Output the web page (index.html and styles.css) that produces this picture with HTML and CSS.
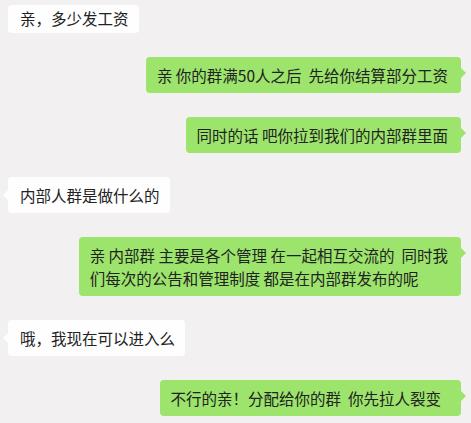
FILE: index.html
```html
<!DOCTYPE html>
<html lang="zh-CN">
<head>
    <meta charset="UTF-8">
    <meta name="viewport" content="width=device-width, initial-scale=1.0">
    <title>聊天记录</title>
    <link rel="stylesheet" href="styles.css">
</head>
<body>
<div class="chat">
    <div class="row left first">
        <div class="bubble">亲，多少发工资</div>
    </div>
    <div class="row right">
        <div class="bubble">亲 你的群满50人之后&nbsp; 先给你结算部分工资</div>
    </div>
    <div class="row right">
        <div class="bubble">同时的话 吧你拉到我们的内部群里面</div>
    </div>
    <div class="row left">
        <div class="bubble">内部人群是做什么的</div>
    </div>
    <div class="row right">
        <div class="bubble">亲 内部群 主要是各个管理 在一起相互交流的&nbsp; 同时我<br>们每次的公告和管理制度 都是在内部群发布的呢</div>
    </div>
    <div class="row left">
        <div class="bubble">哦，我现在可以进入么</div>
    </div>
    <div class="row right">
        <div class="bubble">不行的亲！分配给你的群&nbsp; 你先拉人裂变&nbsp;&nbsp;</div>
    </div>
</div>
</body>
</html>
```

FILE: styles.css
```css
html, body {
    margin: 0;
    padding: 0;
    background-color: #f2f0f1;
}

body {
    font-family: "Noto Sans CJK SC", "Noto Sans", sans-serif;
    font-size: 15.5px;
    color: #222;
}

.chat {
    display: flex;
    flex-direction: column;
    gap: 24px;
    padding: 5px 10px 0 8px;
}

.row {
    display: flex;
}

.row.left {
    justify-content: flex-start;
}

.row.right {
    justify-content: flex-end;
}

.bubble {
    position: relative;
    line-height: 23px;
    border-radius: 4px;
    white-space: nowrap;
}

.left .bubble {
    background-color: #fefefe;
    padding: 6.5px 10px 6.5px 12px;
}

.right .bubble {
    background-color: #9ce46b;
    padding: 6.5px 13px 6.5px 11px;
}

/* the first message is cut at the top of the screen */
.first .bubble {
    padding-top: 2px;
    padding-bottom: 3px;
}

/* little tails */
.bubble::after {
    content: "";
    position: absolute;
    width: 0;
    height: 0;
    border-top: 5px solid transparent;
    border-bottom: 5px solid transparent;
}

.left .bubble::after {
    top: 13px;
    left: -5px;
    border-right: 5px solid #fefefe;
}

.right .bubble::after {
    top: 11px;
    right: -5px;
    border-left: 5px solid #9ce46b;
}

.first .bubble::after {
    display: none;
}
```
